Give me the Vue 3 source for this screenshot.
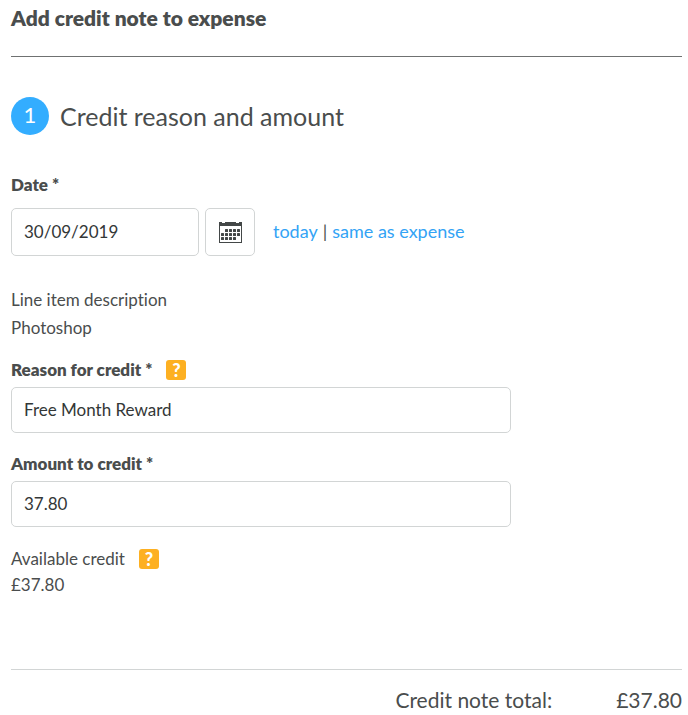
<script setup>
import { ref, computed } from 'vue'

const date = ref('30/09/2019')
const reason = ref('Free Month Reward')
const amount = ref('37.80')
const total = computed(() => '£' + (Number(amount.value) || 0).toFixed(2))

const dots = [
  [6, 7], [10, 7], [14, 7], [18, 7],
  [2, 11], [6, 11], [10, 11], [14, 11], [18, 11],
  [2, 15], [6, 15], [10, 15], [14, 15],
]
</script>

<template>
  <main class="page">
    <h1 class="title">Add credit note to expense</h1>

    <form class="form" @submit.prevent>
      <h2 class="step"><span class="step-number">1</span>Credit reason and amount</h2>

      <label class="label date-label" for="date">Date *</label>
      <div class="date-row">
        <input id="date" v-model="date" class="input date-input" type="text">
        <button class="calendar" type="button" aria-label="Choose date">
          <svg width="23" height="21" viewBox="0 0 23 21" aria-hidden="true">
            <path d="M0 0H3V1H6V0H17V1H20V0H23V21H0ZM1 4V20H22V4Z" fill="#434747" fill-rule="evenodd" />
            <rect v-for="([x, y], i) in dots" :key="i" :x="x" :y="y" width="3" height="3" rx="0.5" fill="#434747" />
          </svg>
        </button>
        <div class="shortcuts"><a href="#today">today</a><span>|</span><a href="#expense">same as expense</a></div>
      </div>

      <div class="readout">
        <p>Line item description</p>
        <p>Photoshop</p>
      </div>

      <div class="label-row">
        <label class="label" for="reason">Reason for credit *</label>
        <button class="help" type="button" aria-label="Help with reason for credit">?</button>
      </div>
      <input id="reason" v-model="reason" class="input" type="text">

      <div class="label-row amount-row">
        <label class="label" for="amount">Amount to credit *</label>
      </div>
      <input id="amount" v-model="amount" class="input" type="text">

      <div class="available">
        <div class="label-row">
          <span>Available credit</span>
          <button class="help" type="button" aria-label="Help with available credit">?</button>
        </div>
        <p>£37.80</p>
      </div>
    </form>

    <footer class="total"><span>Credit note total:</span><span>{{ total }}</span></footer>
  </main>
</template>

<style>
body {
  margin: 0;
  background: #fff;
}
</style>

<style scoped>
.page {
  padding: 4px 6px 0 11px;
  color: #4a4d4d;
  font: 17px/28px Lato, "Liberation Sans", sans-serif;
  font-variant-ligatures: none;
}

.title {
  margin: 0;
  padding-bottom: 24px;
  border-bottom: 1px solid #6f7171;
  font-size: 21px;
  line-height: 28px;
  font-weight: 800;
}

.form {
  padding-top: 40px;
}

.step {
  display: flex;
  align-items: center;
  gap: 11px;
  margin: 0 0 36px;
  font-size: 25px;
  line-height: 36px;
  font-weight: 400;
}

.step-number {
  width: 38px;
  height: 38px;
  border-radius: 50%;
  background: #33adff;
  color: #fff;
  font-size: 22px;
  line-height: 36px;
  text-align: center;
}

.label {
  font-weight: 800;
}

.date-label {
  display: block;
  margin-bottom: 9px;
}

.date-row {
  display: flex;
  align-items: center;
}

.input {
  display: block;
  box-sizing: border-box;
  width: 100%;
  max-width: 500px;
  height: 46px;
  padding: 0 12px 2px;
  border: 1px solid #d2d5d5;
  border-radius: 5px;
  background: #fff;
  color: #333737;
  font: inherit;
}

.date-input {
  width: 188px;
  height: 48px;
}

.calendar {
  display: flex;
  align-items: center;
  justify-content: center;
  width: 50px;
  height: 48px;
  margin: 0 18px 0 6px;
  padding: 0;
  border: 1px solid #d2d5d5;
  border-radius: 5px;
  background: #fff;
}

.shortcuts {
  display: flex;
  gap: 5px;
  padding-bottom: 2px;
  font-size: 18px;
}

.shortcuts a {
  color: #33a3f5;
  text-decoration: none;
}

p {
  margin: 0;
}

.readout {
  padding: 30px 0 14px;
}

.label-row {
  display: flex;
  align-items: center;
  gap: 14px;
  margin-bottom: 3px;
}

.amount-row {
  margin-top: 17px;
}

.help {
  width: 20px;
  height: 20px;
  padding: 0;
  border: 0;
  border-radius: 3px;
  background: #fdb022;
  color: #fff;
  font: 900 18px/20px Lato, sans-serif;
}

.available {
  padding: 18px 0 70px;
}

.available .label-row {
  margin-bottom: -2px;
}

.total {
  display: flex;
  justify-content: flex-end;
  gap: 64px;
  padding-top: 16px;
  border-top: 1px solid #d2d5d5;
  font-size: 21px;
  line-height: 28px;
}
</style>
